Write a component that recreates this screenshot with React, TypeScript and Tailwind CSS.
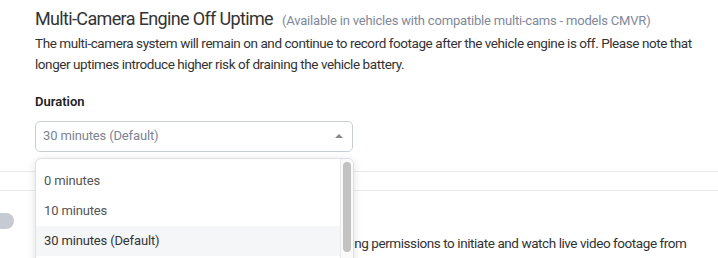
const options = ["0 minutes", "10 minutes", "30 minutes (Default)", "1 hour"]

export default function App() {
  const selected = "30 minutes (Default)"

  return (
    <div className="relative w-[718px] h-[258px] overflow-hidden bg-white text-[#333] font-['Roboto',sans-serif]">
      {/* Engine off uptime section */}
      <div className="pl-[35px] pt-[7px] border-b border-[#ebebeb] h-[172px]">
        <div className="flex items-baseline gap-[9px] whitespace-nowrap">
          <h2 className="text-[18px] leading-[24px] tracking-[-0.65px] text-[#333]">Multi-Camera Engine Off Uptime</h2>
          <span className="text-[13px] tracking-[-0.19px] text-[#7f889a]">
            (Available in vehicles with compatible multi-cams - models CMVR)
          </span>
        </div>
        <p className="mt-[2px] text-[13.5px] leading-[21px] tracking-[-0.43px] w-[670px]">
          The multi-camera system will remain on and continue to record footage after the vehicle engine is off. Please
          note that longer uptimes introduce higher risk of draining the vehicle battery.
        </p>
        <div className="mt-[17px] text-[13px] font-semibold text-[#222]">Duration</div>
        <div className="mt-[9px] w-[318px] h-[31px] flex items-center justify-between pl-[7px] pr-[9px] rounded-[5px] border border-[#c9ced6] text-[13px] tracking-[-0.15px] text-[#7b8494]">
          <span>{selected}</span>
          <span className="w-0 h-0 border-l-[4px] border-r-[4px] border-b-[4px] border-l-transparent border-r-transparent border-b-[#888]" />
        </div>
      </div>
      <div className="h-[19px] border-b border-[#ebebeb]" />

      {/* Live stream section */}
      <div className="relative pt-[22px]">
        <div className="absolute left-[-16px] top-[22px] w-[30px] h-[16px] rounded-full bg-[#c5cad3]" />
        <div className="pl-[35px] text-[13px] font-semibold h-[20px]">Live Stream</div>
        <p className="pl-[35px] text-[13.5px] leading-[21px] tracking-[-0.43px] whitespace-nowrap">
          This setting allows users with the appropriate live streaming permissions to initiate and watch live video
          footage from
        </p>
      </div>

      {/* Open dropdown */}
      <div className="absolute left-[35px] top-[158px] w-[319px] h-[120px] rounded-[6px] border border-[#dde0e5] bg-white shadow-[0_2px_10px_rgba(0,0,0,0.12)] overflow-hidden flex">
        <ul className="flex-1 pt-[7px] text-[13px] tracking-[-0.15px]">
          {options.map((o) => (
            <li
              key={o}
              className={`h-[30px] flex items-center pl-[8px] ${o === selected ? "bg-[#f5f6f8] text-[#333]" : "text-[#555]"}`}
            >
              {o}
            </li>
          ))}
        </ul>
        <div className="w-[13px] border-l border-[#e8e8e8] bg-[#fafafa] pt-[3px] flex justify-center">
          <div className="w-[8px] h-[90px] rounded-full bg-[#c2c2c2]" />
        </div>
      </div>
    </div>
  )
}
